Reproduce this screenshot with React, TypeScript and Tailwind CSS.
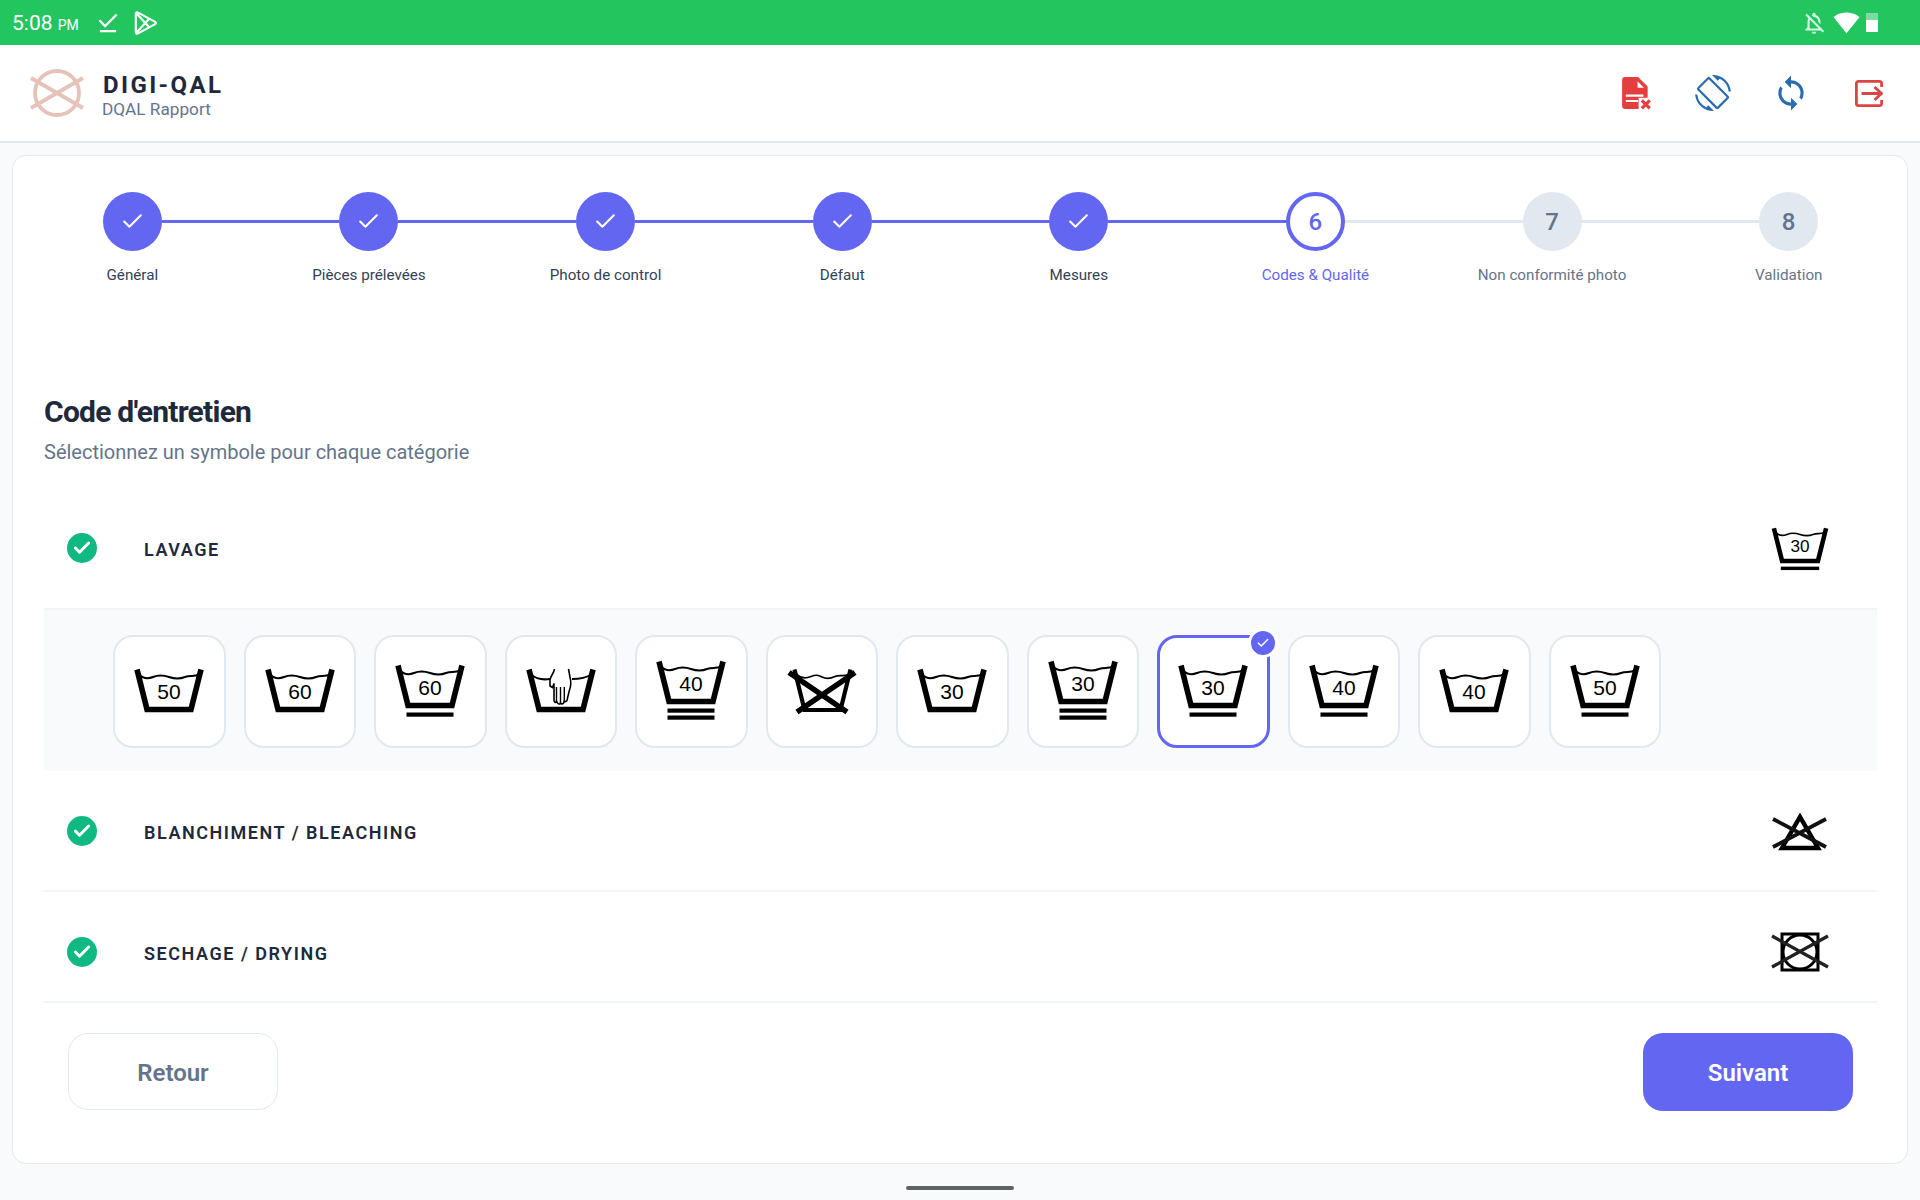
import { Check } from "lucide-react";
import {
  MdDownloadDone,
  MdOutlineNotificationsOff,
  MdOutlineScreenRotation,
  MdSignalWifi4Bar,
  MdSync,
} from "react-icons/md";

const steps = [
  "Général",
  "Pièces prélevées",
  "Photo de control",
  "Défaut",
  "Mesures",
  "Codes & Qualité",
  "Non conformité photo",
  "Validation",
];

const washSymbols = [
  { temp: "50", bars: 0 },
  { temp: "60", bars: 0 },
  { temp: "60", bars: 1 },
  { hand: true, bars: 0 },
  { temp: "40", bars: 2 },
  { crossed: true, bars: 0 },
  { temp: "30", bars: 0 },
  { temp: "30", bars: 2 },
  { temp: "30", bars: 1, selected: true },
  { temp: "40", bars: 1 },
  { temp: "40", bars: 0 },
  { temp: "50", bars: 1 },
];

function Tub({ temp, bars }: { temp?: string; bars: number }) {
  const shift = bars === 1 ? -4 : bars === 2 ? -8 : 0;
  return (
    <>
      <g transform={`translate(0 ${shift})`}>
        <path d="M6 10.500 16 50.500H60L70 10.500" fill="none" stroke="#000" strokeWidth="5.600" />
        <path
          d="M8 15.500C12 19.500 17 20 22 18S32 16 38 18 49 20 54 18 63 18 68 15.500"
          fill="none"
          stroke="#000"
          strokeWidth="2"
        />
        {temp && (
          <text x="38" y="40" textAnchor="middle" fontSize="21" fill="#000" className="font-['Liberation_Sans',sans-serif]">
            {temp}
          </text>
        )}
      </g>
      {bars === 1 && <rect x="14.500" y="53.500" width="47" height="4.200" fill="#000" />}
      {bars === 2 && (
        <>
          <rect x="14.500" y="49.500" width="47" height="4.200" fill="#000" />
          <rect x="14.500" y="56.500" width="47" height="4.200" fill="#000" />
        </>
      )}
    </>
  );
}

function HandTub() {
  return (
    <>
      <path d="M6 10.500 16 50.500H60L70 10.500" fill="none" stroke="#000" strokeWidth="5.600" />
      <path d="M8 15.500C13 20 20 21 27 20M49 20C56 20 63 19 68 15.500" fill="none" stroke="#000" strokeWidth="2" />
      <path
        d="M31.500 10C31 14 27.500 17 27 21V27L29.500 28.500L31 24.500V41C31 44 33 44 33.500 42C34 45 37 46 37.500 44C38.500 45.500 41 45 41 42.500C43 43 44.500 42 44.500 39L46.500 31C48 27 48 22 47 18L45.500 10"
        fill="#fff"
        stroke="#000"
        strokeWidth="1.600"
      />
      <path d="M33.500 28V42M37.500 28V44M41.300 28V42" fill="none" stroke="#000" strokeWidth="1.400" />
    </>
  );
}

function CrossedTub() {
  return (
    <>
      <path d="M10.500 10.500 20.500 51H56.500L66.500 10.500" fill="none" stroke="#000" strokeWidth="4.200" />
      <path d="M13 15.500C17 19.500 22 19.500 27 17.500S34 16 38 18 47 19.500 51 17.500 60 18 64 15.500" fill="none" stroke="#000" strokeWidth="1.700" />
      <path d="M5 13.500 63 53M71 13.500 13 53" fill="none" stroke="#000" strokeWidth="5.400" />
    </>
  );
}

function WashSymbol({ temp, bars = 0, hand, crossed, width = 76 }: { temp?: string; bars?: number; hand?: boolean; crossed?: boolean; width?: number }) {
  return (
    <svg viewBox="0 0 76 64" width={width} height={(width * 64) / 76}>
      {hand ? <HandTub /> : crossed ? <CrossedTub /> : <Tub temp={temp} bars={bars} />}
    </svg>
  );
}

function BleachOff() {
  return (
    <svg viewBox="0 0 62 52" width="62" height="52">
      <path d="M13 43H49L31 12Z" fill="none" stroke="#000" strokeWidth="4.400" />
      <path d="M4 14 57 42M57 14 4 42" fill="none" stroke="#111" strokeWidth="3.800" />
    </svg>
  );
}

function DryOff() {
  return (
    <svg viewBox="0 0 62 52" width="62" height="52">
      <rect x="13" y="8" width="36" height="36" fill="none" stroke="#000" strokeWidth="3" />
      <circle cx="31" cy="26" r="17" fill="none" stroke="#000" strokeWidth="3" />
      <path d="M3 10 59 41M59 10 3 41" fill="none" stroke="#222" strokeWidth="3.400" />
    </svg>
  );
}

function StatusBar() {
  return (
    <div className="flex h-[45px] items-center bg-[#22c55e] pl-[12px] pr-[42px] text-white">
      <span className="pt-[2px] text-[21px] leading-none">
        5:08 <span className="text-[14px]">PM</span>
      </span>
      <MdDownloadDone className="ml-[15px] text-white" size={28} />
      <svg viewBox="0 0 24 24" width="26" height="26" className="ml-[10px]" fill="none" stroke="#fff" strokeWidth="2" strokeLinejoin="round">
        <path d="M3.500 3.600C3.500 2.400 4.600 1.800 5.600 2.400L21.400 11C22.300 11.500 22.300 12.600 21.400 13L5.600 21.600C4.600 22.200 3.500 21.600 3.500 20.400Z" />
        <path d="M4 3 15.500 15.500M4 21 15.500 8.500" />
      </svg>
      <div className="ml-auto flex items-center">
        <MdOutlineNotificationsOff size={26} className="text-[#d1fae5]" />
        <MdSignalWifi4Bar size={27} className="ml-[6px]" />
        <div className="ml-[6px] flex h-[19px] w-[12px] flex-col bg-white/40 pt-[7px]">
          <div className="flex-1 bg-white" />
        </div>
      </div>
    </div>
  );
}

function Header() {
  return (
    <div className="flex h-[98px] items-center border-b-2 border-[#e2e8f0] bg-white pl-[29px] pr-[31px]">
      <svg viewBox="0 0 56 50" width="56" height="50" fill="none" stroke="#e6c3ba" strokeWidth="3.800">
        <circle cx="28" cy="25" r="22" />
        <path d="M2 10 54 40M54 10 2 40" />
      </svg>
      <div className="ml-[18px] flex flex-col pt-[4px]">
        <span className="text-[24px] font-bold leading-[28px] tracking-[0.1em] text-[#1e293b]">DIGI-QAL</span>
        <span className="-ml-[1px] text-[17.2px] leading-[21px] text-[#64748b]">DQAL Rapport</span>
      </div>
      <div className="ml-auto flex items-center gap-[38px]">
        <div className="flex w-[40px] justify-center pl-[3px]">
          <svg viewBox="0 0 28 31" width="30" height="33">
            <path d="M3 0H15L24 9V27C24 29 23 30 21 30H3C1 30 0 29 0 27V3C0 1 1 0 3 0Z" fill="#e53e3e" />
            <path d="M14.500 4V10H20.500Z" fill="#fff" />
            <path d="M3.500 17.500H20M3.500 22.500H15" stroke="#fff" strokeWidth="2" />
            <path d="M15.500 19.500H28V31H15.500Z" fill="#fff" />
            <path d="M18.500 22 26 29.500M26 22 18.500 29.500" stroke="#e53e3e" strokeWidth="3" />
          </svg>
        </div>
        <MdOutlineScreenRotation size={36} className="w-[40px] text-[#2b6cb0]" />
        <MdSync size={38} className="w-[40px] text-[#2b6cb0]" />
        <div className="flex w-[40px] justify-center">
          <svg viewBox="0 0 28 27" width="28" height="27" fill="none" stroke="#dc4444" strokeWidth="2.800">
            <path d="M26.600 7V3.400C26.600 2.200 25.800 1.400 24.600 1.400H3.400C2.200 1.400 1.400 2.200 1.400 3.400V23.600C1.400 24.800 2.200 25.600 3.400 25.600H24.600C25.800 25.600 26.600 24.800 26.600 23.600V20" />
            <path d="M6.500 13.500H26M19.500 7 26.500 13.500 19.500 20" />
          </svg>
        </div>
      </div>
    </div>
  );
}

function Stepper() {
  return (
    <div className="flex pl-[1px] pt-[36px]">
      {steps.map((label, i) => {
        const done = i < 5;
        const active = i === 5;
        return (
          <div key={label} className="flex flex-1 flex-col items-center">
            <div className="flex w-full items-center">
              <div className={`h-[3px] flex-1 ${i === 0 ? "bg-transparent" : i <= 5 ? "bg-[#6366f1]" : "bg-[#e2e8f0]"}`} />
              <div
                className={`flex size-[59px] shrink-0 items-center justify-center rounded-full text-[24px] font-medium ${
                  done
                    ? "bg-[#6366f1] text-white"
                    : active
                      ? "border-4 border-[#6366f1] bg-white text-[#6366f1]"
                      : "bg-[#e2e8f0] text-[#64748b]"
                }`}
              >
                {done ? <Check size={25} strokeWidth={2} /> : i + 1}
              </div>
              <div className={`h-[3px] flex-1 ${i === 7 ? "bg-transparent" : i < 5 ? "bg-[#6366f1]" : "bg-[#e2e8f0]"}`} />
            </div>
            <span
              className={`mt-[14px] text-[15.2px] leading-[20px] ${
                done ? "text-[#334155]" : active ? "text-[#6366f1]" : "text-[#64748b]"
              }`}
            >
              {label}
            </span>
          </div>
        );
      })}
    </div>
  );
}

function StatusCheck() {
  return (
    <div className="flex size-[30px] items-center justify-center rounded-full bg-[#10b981] text-white">
      <Check size={20} strokeWidth={3.500} />
    </div>
  );
}

function CategoryRow({ title, icon, className }: { title: string; icon: React.ReactNode; className: string }) {
  return (
    <div className={`flex items-center border-b-2 border-[#f1f5f9] pl-[23px] pr-[46px] ${className}`}>
      <StatusCheck />
      <span className="ml-[47px] pt-[4px] text-[18px] font-semibold tracking-[1.54px] text-[#1e293b]">{title}</span>
      <div className="ml-auto flex w-[62px] justify-center">{icon}</div>
    </div>
  );
}

export default function App() {
  return (
    <div className="flex min-h-[1200px] flex-col bg-[#f8fafc] font-[Roboto,sans-serif]">
      <StatusBar />
      <Header />
      <div className="mx-[12px] mt-[12px] h-[1009px] rounded-[14px] border border-[#e2e8f0] bg-white">
        <Stepper />
        <div className="pl-[31px] pr-[30px]">
          <h1 className="mt-[109px] text-[30px] font-bold leading-[36px] tracking-tight text-[#1e293b]">Code d'entretien</h1>
          <p className="mt-[8px] text-[20px] leading-[28px] text-[#64748b]">Sélectionnez un symbole pour chaque catégorie</p>

          <div className="mt-[21px]">
            <CategoryRow title="LAVAGE" className="h-[123px]" icon={<div className="translate-y-[2px]"><WashSymbol temp="30" bars={1} width={62} /></div>} />
            <div className="flex h-[161px] items-center gap-[18px] bg-[#f8fafc] pl-[69px] pt-[2px]">
              {washSymbols.map((symbol, i) => (
                <div
                  key={i}
                  className={`relative flex h-[113px] w-[112.5px] shrink-0 items-center justify-center rounded-[20px] bg-white pb-[2px] ${
                    symbol.selected ? "border-[3px] border-[#6366f1]" : "border-2 border-[#e2e8f0]"
                  }`}
                >
                  <WashSymbol temp={symbol.temp} bars={symbol.bars} hand={symbol.hand} crossed={symbol.crossed} />
                  {symbol.selected && (
                    <div className="absolute right-[-11px] top-[-10px] flex size-[30px] items-center justify-center rounded-full border-[3px] border-white bg-[#6366f1] text-white">
                      <Check size={14} strokeWidth={2.500} />
                    </div>
                  )}
                </div>
              ))}
            </div>
            <CategoryRow title="BLANCHIMENT / BLEACHING" className="h-[121px]" icon={<BleachOff />} />
            <CategoryRow title="SECHAGE / DRYING" className="h-[111px] pt-[10px]" icon={<DryOff />} />
          </div>

          <div className="flex justify-between px-[24px] pt-[30px]">
            <button className="h-[77px] w-[210px] rounded-[20px] border border-[#e2e8f0] bg-white pt-[2px] text-[24px] font-semibold text-[#64748b]">
              Retour
            </button>
            <button className="h-[78px] w-[210px] rounded-[20px] bg-[#6366f1] pt-[2px] text-[24px] font-semibold text-white">
              Suivant
            </button>
          </div>
        </div>
      </div>
      <div className="mx-auto mt-[22px] h-[4px] w-[108px] rounded-full bg-[#5f6368]" />
    </div>
  );
}
